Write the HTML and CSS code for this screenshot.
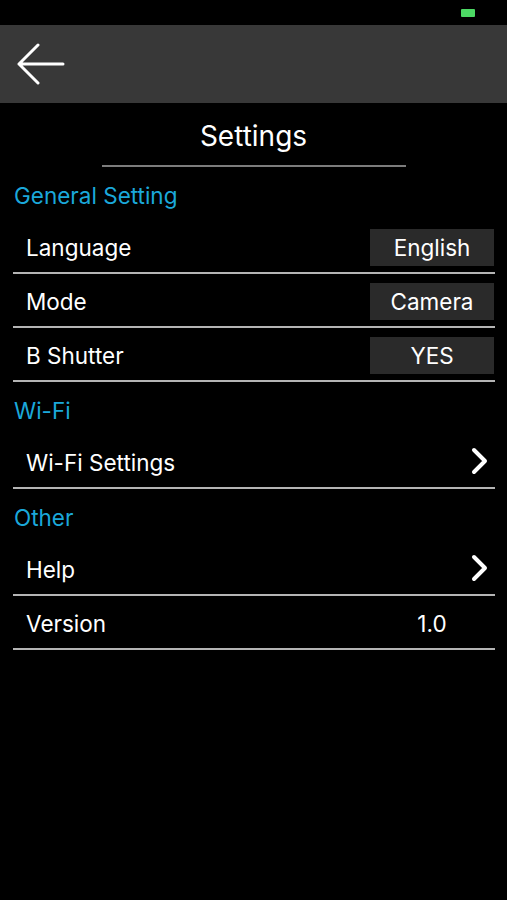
FILE: index.html
```html
<html>
  <head>
    <link rel="stylesheet" href="styles.css">
    <title>Settings</title>
  </head>
  <body>
    <div class="status">
      <span class="battery"></span>
    </div>
    <div class="toolbar">
      <svg class="back" width="48" height="46" viewBox="0 0 48 46">
        <path d="M21 3 L2 22 L21 41 M2 22 L46 22" fill="none" stroke="#fff" stroke-width="3" stroke-linecap="round" stroke-linejoin="round"/>
      </svg>
    </div>
    <div class="title">Settings</div>
    <div class="title-line"></div>

    <div class="list">
      <div class="section">General Setting</div>
      <div class="row">
        <span class="label">Language</span>
        <span class="value box">English</span>
      </div>
      <div class="row">
        <span class="label">Mode</span>
        <span class="value box">Camera</span>
      </div>
      <div class="row">
        <span class="label">B Shutter</span>
        <span class="value box">YES</span>
      </div>

      <div class="section">Wi-Fi</div>
      <div class="row">
        <span class="label">Wi-Fi Settings</span>
        <svg class="chevron" width="20" height="30" viewBox="0 0 20 30">
          <path d="M4 4 L15 15 L4 26" fill="none" stroke="#fff" stroke-width="4" stroke-linecap="round" stroke-linejoin="round"/>
        </svg>
      </div>

      <div class="section">Other</div>
      <div class="row">
        <span class="label">Help</span>
        <svg class="chevron" width="20" height="30" viewBox="0 0 20 30">
          <path d="M4 4 L15 15 L4 26" fill="none" stroke="#fff" stroke-width="4" stroke-linecap="round" stroke-linejoin="round"/>
        </svg>
      </div>
      <div class="row">
        <span class="label">Version</span>
        <span class="value">1.0</span>
      </div>
    </div>
  </body>
</html>
```

FILE: styles.css
```css
body {
  margin: 0;
  background: #000;
  color: #fff;
  font-family: Inter, "Noto Sans", sans-serif;
}

.status {
  height: 25px;
  display: flex;
  justify-content: flex-end;
  align-items: flex-start;
  padding-right: 32px;
  box-sizing: border-box;
}

.battery {
  width: 14px;
  height: 8px;
  margin-top: 9px;
  background: #4cd964;
  border-radius: 1px;
}

.toolbar {
  height: 78px;
  background: #383838;
  display: flex;
  align-items: center;
  padding-left: 17px;
}

.back {
  display: block;
  margin-top: 2px;
}

.title {
  height: 62px;
  line-height: 66px;
  text-align: center;
  font-size: 28px;
}

.title-line {
  width: 304px;
  height: 2px;
  margin: 0 auto;
  background: #7c7c7c;
}

.list {
  margin: 0 12px 0 13px;
}

.section {
  height: 53px;
  line-height: 57px;
  padding-left: 1px;
  font-size: 22.5px;
  color: #1ba8da;
}

.row {
  height: 52px;
  border-bottom: 2px solid #b4b4b4;
  display: flex;
  align-items: center;
  justify-content: space-between;
  padding-left: 13px;
  font-size: 22.5px;
}

.label {
  margin-top: 3px;
}

.value {
  width: 124px;
  margin-right: 1px;
  margin-top: 3px;
  text-align: center;
}

.box {
  height: 37px;
  line-height: 38px;
  background: #2a2a2a;
}

.chevron {
  display: block;
  margin-right: 5px;
}
```
